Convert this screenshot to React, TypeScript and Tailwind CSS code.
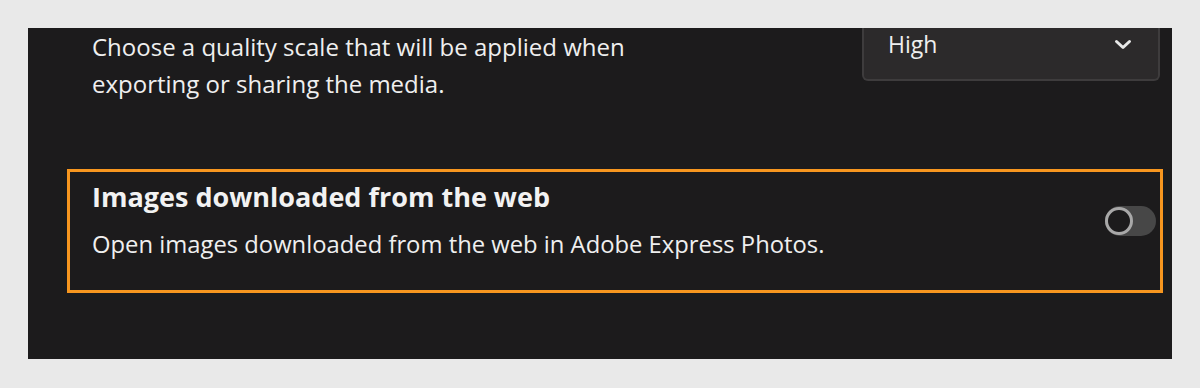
import React from "react";

export default function App() {
  return (
    <div className="w-[1200px] h-[388px] bg-[#e9e9e9] pt-[28px] px-[28px]" style={{ fontFamily: '"Open Sans", "Noto Sans", sans-serif' }}>
      <div className="h-[331px] bg-[#1c1b1c] overflow-hidden flex flex-col">
        <div className="flex justify-between pl-[64px] pr-[12px]">
          <p className="text-[24px] leading-[37px] text-[#efefef] whitespace-nowrap">
            Choose a quality scale that will be applied when
            <br />
            exporting or sharing the media.
          </p>
          <div className="w-[298px] h-[53px] bg-[#2c2a2b] border-x-2 border-b-2 border-[#3e3c3d] rounded-b-[6px] flex items-center justify-between pl-[24px] pr-[26px]">
            <span className="text-[23px] text-[#efefef] -mt-[18px]">High</span>
            <svg width="18" height="12" viewBox="0 0 18 12" className="-mt-[18px]">
              <path d="M2.5 2.5 L9 8.5 L15.5 2.5" fill="none" stroke="#e8e8e8" strokeWidth="3" strokeLinecap="round" strokeLinejoin="round" />
            </svg>
          </div>
        </div>
        <div className="ml-[39px] mr-[9px] mt-[67px] h-[124px] border-[3px] border-[#f7961f] flex items-center justify-between pl-[22px] pr-[4px] pb-[21px]">
          <div className="flex flex-col">
            <span className="text-[27px] leading-[34px] font-bold text-[#f2f2f2]">Images downloaded from the web</span>
            <span className="text-[23.8px] leading-[34px] mt-[13px] text-[#efefef]">Open images downloaded from the web in Adobe Express Photos.</span>
          </div>
          <div className="relative w-[51px] h-[30px] rounded-full bg-[#474747]">
            <div className="absolute left-0 top-[1px] w-[28px] h-[28px] rounded-full border-[3px] border-[#a8a8a8] bg-[#1c1b1c]" />
          </div>
        </div>
      </div>
    </div>
  );
}
